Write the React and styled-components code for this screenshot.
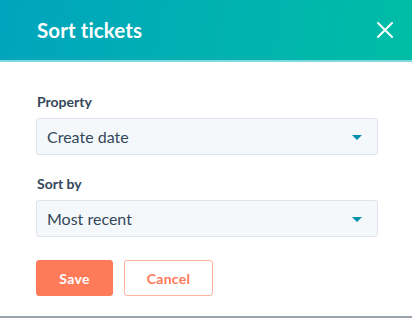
import React from 'react'
import styled, { createGlobalStyle } from 'styled-components'

const GlobalStyle = createGlobalStyle`
  html, body { margin: 0; padding: 0; background: #fff; }
  body { font-family: Lato, "Liberation Sans", sans-serif; }
`

const StyledDialog = styled.div`
  width: 412px;
  height: 318px;
  box-sizing: border-box;
  border-bottom: 2px solid #99a3ad;
  display: flex;
  flex-direction: column;
  background: #fff;
`
const StyledHeader = styled.div`
  height: 62px;
  box-sizing: border-box;
  border-bottom: 2px solid #7fd9de;
  background: linear-gradient(100deg, #00a4bd 0%, #00bda5 100%);
  display: flex;
  align-items: center;
  justify-content: space-between;
  padding: 0 18px 0 37px;
`
const StyledTitle = styled.h2`
  margin: 0;
  color: #fff;
  font-size: 20.5px;
  font-weight: 700;
  letter-spacing: 0.1px;
`
const StyledClose = styled.button`
  border: 0;
  background: none;
  padding: 0;
  width: 18px;
  height: 18px;
  display: flex;
  color: #fff;
`
const StyledBody = styled.div`
  padding: 31px 34px 0 36px;
  display: flex;
  flex-direction: column;
`
const StyledField = styled.div`
  display: flex;
  flex-direction: column;
  margin-bottom: 20px;
`
const StyledLabel = styled.label`
  color: #33475b;
  font-size: 14px;
  font-weight: 700;
  margin-left: 1px;
  margin-bottom: 7px;
  line-height: 18px;
`
const StyledSelect = styled.div`
  height: 37px;
  box-sizing: border-box;
  border: 1px solid #dfe3eb;
  border-radius: 3px;
  background: #f5f8fa;
  display: flex;
  align-items: center;
  justify-content: space-between;
  padding: 0 15px 0 10px;
  color: #33475b;
  font-size: 16px;
`
const StyledCaret = styled.span`
  width: 0;
  height: 0;
  border-left: 5px solid transparent;
  border-right: 5px solid transparent;
  border-top: 5px solid #0091ae;
  margin-top: 1px;
`
const StyledActions = styled.div`
  display: flex;
  gap: 11px;
  margin-top: 3px;
`
const StyledButton = styled.button`
  height: 36px;
  box-sizing: border-box;
  border-radius: 3px;
  font-family: inherit;
  font-size: 14px;
  font-weight: 700;
  letter-spacing: 0.3px;
  width: ${p => p.$w}px;
  padding: 0;
  border: 1px solid ${p => (p.$primary ? '#ff7a59' : '#ffb19d')};
  background: ${p => (p.$primary ? '#ff7a59' : '#fff')};
  color: ${p => (p.$primary ? '#fff' : '#ff7a59')};
`

const Field = ({ label, value }) => (
  <StyledField>
    <StyledLabel>{label}</StyledLabel>
    <StyledSelect>
      {value}
      <StyledCaret />
    </StyledSelect>
  </StyledField>
)

const App = () => (
  <>
    <GlobalStyle />
    <StyledDialog>
      <StyledHeader>
        <StyledTitle>Sort tickets</StyledTitle>
        <StyledClose aria-label="Close">
          <svg width="18" height="18" viewBox="0 0 18 18">
            <path d="M2 2L16 16M16 2L2 16" stroke="currentColor" strokeWidth="2" strokeLinecap="round" />
          </svg>
        </StyledClose>
      </StyledHeader>
      <StyledBody>
        <Field label="Property" value="Create date" />
        <Field label="Sort by" value="Most recent" />
        <StyledActions>
          <StyledButton $primary $w={77}>Save</StyledButton>
          <StyledButton $w={89}>Cancel</StyledButton>
        </StyledActions>
      </StyledBody>
    </StyledDialog>
  </>
)

export default App
